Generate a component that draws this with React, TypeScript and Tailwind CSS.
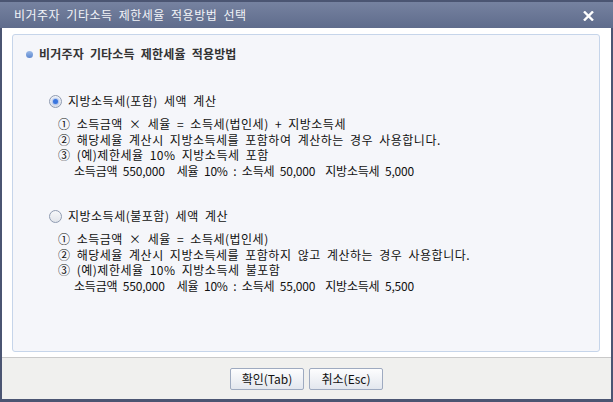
import React from 'react'

const FONT = '"Noto Sans CJK KR", "Liberation Sans", sans-serif'

function Radio({ checked }: { checked?: boolean }) {
  return (
    <span className="relative flex size-[13px] shrink-0 items-center justify-center rounded-full border border-[#8f9bb1] bg-gradient-to-b from-[#f6f7f9] to-[#e2e5eb]">
      {checked && (
        <span className="size-[5px] rounded-full bg-[#3a76de] shadow-[0_0_2px_1px_rgba(80,130,230,0.5)]" />
      )}
    </span>
  )
}

interface Method {
  label: string
  checked?: boolean
  formula: string
  usage: string
  example: string
  tax: string
  local: string
}

const methods: Method[] = [
  {
    label: '지방소득세(포함) 세액 계산',
    checked: true,
    formula: '소득금액 × 세율 = 소득세(법인세) + 지방소득세',
    usage: '해당세율 계산시 지방소득세를 포함하여 계산하는 경우 사용합니다.',
    example: '(예)제한세율 10% 지방소득세 포함',
    tax: '50,000',
    local: '5,000',
  },
  {
    label: '지방소득세(불포함) 세액 계산',
    formula: '소득금액 × 세율 = 소득세(법인세)',
    usage: '해당세율 계산시 지방소득세를 포함하지 않고 계산하는 경우 사용합니다.',
    example: '(예)제한세율 10% 지방소득세 불포함',
    tax: '55,000',
    local: '5,500',
  },
]

function MethodBlock({ m }: { m: Method }) {
  return (
    <div className="flex flex-col">
      <label className="flex h-[16px] items-center gap-[6px] pl-[36px]">
        <Radio checked={m.checked} />
        <span>{m.label}</span>
      </label>
      <div className="mt-[7px] flex flex-col pl-[45px] leading-[15.5px]">
        <div>① {m.formula}</div>
        <div>② {m.usage}</div>
        <div>③ {m.example}</div>
        <div className="pl-[16px] tracking-[-0.2px]">
          <span>소득금액 550,000</span>
          <span className="ml-[12px]">세율 10% : 소득세 {m.tax}</span>
          <span className="ml-[10px]">지방소득세 {m.local}</span>
        </div>
      </div>
    </div>
  )
}

export default function App() {
  return (
    <div
      className="flex h-[402px] w-[613px] flex-col bg-[#4b5572] text-[12px] text-[#111]"
      style={{ fontFamily: FONT }}
    >
      <div className="flex h-[28px] shrink-0 items-center justify-between border-t-2 border-[#4b5572] bg-gradient-to-b from-[#7682a0] to-[#5f6c8c] pl-[14px] pr-[19px]">
        <span className="text-[12px] tracking-[0.5px] text-[#f2f4f8] [word-spacing:3px]">
          비거주자 기타소득 제한세율 적용방법 선택
        </span>
        <svg width="11" height="10" viewBox="0 0 11 10" className="mt-[1px]">
          <path d="M1 0.5 L10 9.5 M10 0.5 L1 9.5" stroke="#ffffff" strokeWidth="2.4" />
        </svg>
      </div>

      <div className="mx-[2px] flex flex-1 flex-col bg-white pb-[5px] pl-[10px] pr-[11px] pt-[6px]">
        <div className="flex flex-1 flex-col rounded-[3px] border border-[#c6d5ea] bg-[#f5f6fa] pt-[9px] tracking-[0.5px] [word-spacing:3px]">
          <div className="flex h-[20px] items-center gap-[6px] pl-[13px]">
            <span className="size-[7px] rounded-full bg-gradient-to-b from-[#9cbbe8] to-[#5d87cf]" />
            <span className="font-bold tracking-[0.2px] text-[#333]">비거주자 기타소득 제한세율 적용방법</span>
          </div>
          <div className="mt-[29px] flex flex-col gap-[30px]">
            {methods.map((m) => (
              <MethodBlock key={m.label} m={m} />
            ))}
          </div>
        </div>
      </div>

      <div className="mx-[2px] mb-[3px] flex h-[42px] shrink-0 items-center justify-center gap-[5px] border-t border-[#c9c9c9] bg-[#f0f0ee]">
        <button
          type="button"
          className="h-[22px] w-[74px] rounded-[2px] border border-[#9eaac0] bg-gradient-to-b from-[#fdfdfe] to-[#e3e7ee] text-[12px] text-[#111]"
        >
          확인(Tab)
        </button>
        <button
          type="button"
          className="h-[22px] w-[74px] rounded-[2px] border border-[#9eaac0] bg-gradient-to-b from-[#fdfdfe] to-[#e3e7ee] text-[12px] text-[#111]"
        >
          취소(Esc)
        </button>
      </div>
    </div>
  )
}
